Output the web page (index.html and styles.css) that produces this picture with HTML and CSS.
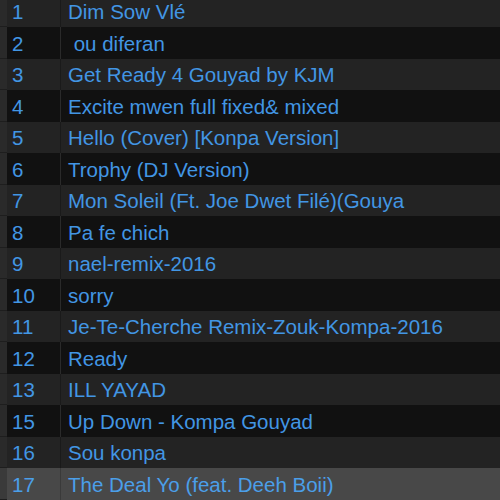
FILE: index.html
```
<!DOCTYPE html>
<html>
<head>
<meta charset="utf-8">
<link rel="stylesheet" href="styles.css">
</head>
<body>
<div class="list">
  <div class="row light"><span class="strip"></span><span class="num">1</span><span class="title">Dim Sow Vlé</span></div>
  <div class="row dark"><span class="strip"></span><span class="num">2</span><span class="title">&nbsp;ou diferan</span></div>
  <div class="row light"><span class="strip"></span><span class="num">3</span><span class="title">Get Ready 4 Gouyad by KJM</span></div>
  <div class="row dark"><span class="strip"></span><span class="num">4</span><span class="title">Excite mwen full fixed&amp; mixed</span></div>
  <div class="row light"><span class="strip"></span><span class="num">5</span><span class="title">Hello (Cover) [Konpa Version]</span></div>
  <div class="row dark"><span class="strip"></span><span class="num">6</span><span class="title">Trophy (DJ Version)</span></div>
  <div class="row light"><span class="strip"></span><span class="num">7</span><span class="title">Mon Soleil (Ft. Joe Dwet Filé)(Gouya</span></div>
  <div class="row dark"><span class="strip"></span><span class="num">8</span><span class="title">Pa fe chich</span></div>
  <div class="row light"><span class="strip"></span><span class="num">9</span><span class="title">nael-remix-2016</span></div>
  <div class="row dark"><span class="strip"></span><span class="num">10</span><span class="title">sorry</span></div>
  <div class="row light"><span class="strip"></span><span class="num">11</span><span class="title">Je-Te-Cherche Remix-Zouk-Kompa-2016</span></div>
  <div class="row dark"><span class="strip"></span><span class="num">12</span><span class="title">Ready</span></div>
  <div class="row light"><span class="strip"></span><span class="num">13</span><span class="title">ILL YAYAD</span></div>
  <div class="row dark"><span class="strip"></span><span class="num">15</span><span class="title">Up Down - Kompa Gouyad</span></div>
  <div class="row light"><span class="strip"></span><span class="num">16</span><span class="title">Sou konpa</span></div>
  <div class="row selected"><span class="strip"></span><span class="num">17</span><span class="title">The Deal Yo (feat. Deeh Boii)</span></div>
</div>
</body>
</html>
```
FILE: styles.css
```
html, body {
  margin: 0;
  padding: 0;
  background: #222222;
  overflow: hidden;
}
.list {
  margin-top: -4.5px;
  font-family: "Liberation Sans", Arial, sans-serif;
  font-size: 20.5px;
  color: #4296e4;
}
.row {
  display: flex;
  height: 31.5px;
  align-items: center;
  white-space: nowrap;
}
.row.light { background: #232323; }
.row.dark { background: #111111; }
.row.selected { background: #484848; color: #4b9fe9; }
.strip {
  align-self: stretch;
  width: 7px;
  flex: none;
  background: #2a2a2a;
  box-shadow: inset 0 -1px 0 #1e1e1e;
}
.row.selected .strip { background: #3a3a3a; }
.num {
  align-self: stretch;
  display: flex;
  align-items: center;
  width: 54px;
  flex: none;
  padding-left: 5px;
  box-sizing: border-box;
  border-right: 1px solid #1a1a1a;
  padding-top: 2px;
}
.row.dark .num { border-right-color: #2a2a2a; }
.row.selected .num { border-right-color: #3a3a3a; }
.title {
  padding-left: 7px;
  padding-top: 2px;
}
```
